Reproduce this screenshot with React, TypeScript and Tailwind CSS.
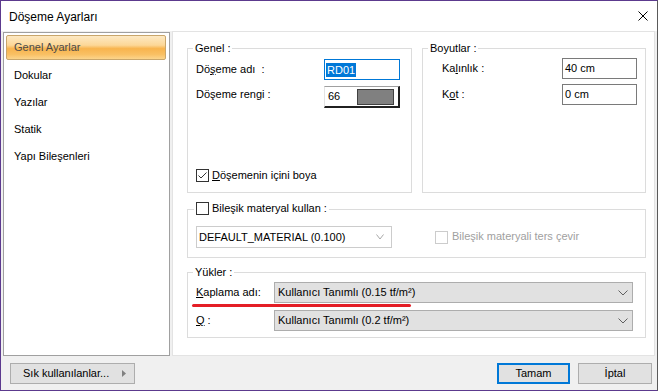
import React from "react";

function Chevron({ color = "#606060", w = 10 }: { color?: string; w?: number }) {
  return (
    <svg width={w} height="6" viewBox={`0 0 ${w} 6`}>
      <polyline points={`0.5,0.5 ${w / 2},5 ${w - 0.5},0.5`} fill="none" stroke={color} strokeWidth="1" />
    </svg>
  );
}

function CheckBox({ checked = false, disabled = false }: { checked?: boolean; disabled?: boolean }) {
  return (
    <div
      className={`w-[13px] h-[13px] bg-white border flex items-center justify-center shrink-0 ${
        disabled ? "border-[#cccccc]" : "border-[#333333]"
      }`}
    >
      {checked && (
        <svg width="11" height="11" viewBox="0 0 11 11">
          <polyline points="1.5,5.5 4,8 9.5,2.5" fill="none" stroke="#333333" strokeWidth="1" />
        </svg>
      )}
    </div>
  );
}

function Group({
  label,
  className,
  children,
}: {
  label: React.ReactNode;
  className: string;
  children?: React.ReactNode;
}) {
  return (
    <div className={`relative border border-[#dcdcdc] ${className}`}>
      <div className="absolute -top-[7px] left-[5px] px-[2px] bg-white leading-[13px] flex items-center">{label}</div>
      {children}
    </div>
  );
}

const sideItems = ["Dokular", "Yazılar", "Statik", "Yapı Bileşenleri"];

export default function App() {
  return (
    <div className="w-[658px] h-[391px] bg-[#f0f0f0] border border-[#5c3a8e] border-r-[#5a5a5a] flex flex-col text-[11px] leading-[13px] text-black font-['Liberation_Sans',Arial,sans-serif] overflow-hidden">
      {/* Title bar */}
      <div className="h-[30px] bg-white flex items-center justify-between pl-[8px] pr-[9px] shrink-0">
        <span className="text-[12px] pt-[2px]">Döşeme Ayarları</span>
        <svg width="10" height="10" viewBox="0 0 10 10">
          <line x1="0.5" y1="0.5" x2="9.5" y2="9.5" stroke="#000" strokeWidth="1" />
          <line x1="9.5" y1="0.5" x2="0.5" y2="9.5" stroke="#000" strokeWidth="1" />
        </svg>
      </div>

      {/* Body */}
      <div className="flex h-[325px] shrink-0">
        {/* Sidebar */}
        <div className="ml-[2px] mt-[1px] w-[167px] h-[324px] bg-white border border-[#a0a0a0] pt-[2px]">
          <div className="h-[27px]">
            <div className="ml-[2px] w-[160px] h-[25px] rounded-[2px] border border-[#c9a66b] bg-[linear-gradient(to_bottom,#fde9c4_0%,#fcd797_40%,#f8b44e_55%,#f9c064_80%,#fcd58c_100%)] flex items-center pl-[7px] text-[#4a4a4a]">
              Genel Ayarlar
            </div>
          </div>
          {sideItems.map((t) => (
            <div key={t} className="h-[27px] flex items-center pl-[10px]">
              {t}
            </div>
          ))}
        </div>

        {/* Main panel */}
        <div className="ml-[2px] w-[483px] h-[325px] bg-white border border-[#e3e3e3] pl-[14px] pt-[16px]">
          <div className="flex gap-[10px]">
            {/* Genel */}
            <Group label="Genel :" className="w-[225px] h-[145px] flex flex-col pl-[8px] pt-[10px] pb-[10px]">
              <div className="flex items-center h-[21px]">
                <div className="w-[128px]">
                  Dö<span className="underline">ş</span>eme adı&nbsp; :
                </div>
                <div className="w-[76px] h-[21px] border border-[#0078d7] flex items-center pl-[1px]">
                  <span className="bg-[#0078d7] text-white px-[1px] leading-[14px]">RD01</span>
                </div>
              </div>
              <div className="flex items-start h-[22px] mt-[6px]">
                <div className="w-[128px] mt-[2px]">Döşeme rengi :</div>
                <div className="w-[76px] h-[22px] border-t border-t-[#a0a0a0] border-l border-l-[#e3e3e3] border-r-2 border-r-[#202020] border-b-2 border-b-[#202020] flex items-center bg-white">
                  <span className="w-[32px] pl-[3px]">66</span>
                  <div className="w-[37px] h-[16px] bg-[#808080] border border-[#404040]" />
                </div>
              </div>
              <div className="mt-auto flex items-center h-[13px] gap-[3px]">
                <CheckBox checked />
                <span>
                  <span className="underline">D</span>öşemenin içini boya
                </span>
              </div>
            </Group>

            {/* Boyutlar */}
            <Group label="Boyutlar :" className="w-[224px] h-[145px] flex flex-col pl-[19px] pt-[9px]">
              <div className="flex items-center h-[21px]">
                <div className="w-[120px]">
                  Ka<span className="underline">l</span>ınlık :
                </div>
                <div className="w-[75px] h-[21px] border border-[#7a7a7a] flex items-center pl-[2px]">40 cm</div>
              </div>
              <div className="flex items-center h-[21px] mt-[5px]">
                <div className="w-[120px]">
                  K<span className="underline">o</span>t :
                </div>
                <div className="w-[75px] h-[21px] border border-[#7a7a7a] flex items-center pl-[2px]">0 cm</div>
              </div>
            </Group>
          </div>

          {/* Bileşik */}
          <div className="relative mt-[16px] w-[459px] h-[49px] border border-[#dcdcdc] pl-[8px] pt-[16px]">
            <div className="absolute -top-[8px] left-[6px] px-[2px] bg-white flex items-center gap-[3px] h-[13px]">
              <CheckBox />
              <span>Bileşik materyal kullan :</span>
            </div>
            <div className="flex items-center">
              <div className="w-[196px] h-[22px] border border-[#cccccc] flex items-center justify-between pl-[2px] pr-[7px] bg-white">
                <span>DEFAULT_MATERIAL (0.100)</span>
                <Chevron color="#a8a8a8" w={8} />
              </div>
              <div className="ml-[43px] flex items-center gap-[4px] text-[#a0a0a0]">
                <CheckBox disabled />
                <span className="-mt-[2px]">Bileşik materyali ters çevir</span>
              </div>
            </div>
          </div>

          {/* Yükler */}
          <Group label="Yükler :" className="mt-[14px] w-[459px] h-[66px] pl-[8px] pt-[9px]">
            <div className="flex items-center h-[21px]">
              <div className="w-[78px]">
                <span className="underline">K</span>aplama adı:
              </div>
              <div className="w-[359px] h-[21px] border border-[#adadad] bg-[#e1e1e1] flex items-center justify-between pl-[3px] pr-[4px]">
                <span>Kullanıcı Tanımlı (0.15 tf/m²)</span>
                <Chevron />
              </div>
            </div>
            <div className="flex items-center h-[21px] mt-[7px]">
              <div className="w-[78px]">
                <span className="underline">Q</span> :
              </div>
              <div className="w-[359px] h-[21px] border border-[#adadad] bg-[#e1e1e1] flex items-center justify-between pl-[3px] pr-[4px]">
                <span>Kullanıcı Tanımlı (0.2 tf/m²)</span>
                <Chevron />
              </div>
            </div>
            <div className="absolute left-[4px] top-[31px] w-[219px] h-[3px] rounded-full bg-[#e41e26]" />
          </Group>
        </div>
      </div>

      {/* Bottom bar */}
      <div className="flex-1 flex items-start pt-[7px] pl-[9px] pr-[5px]">
        <div className="w-[125px] h-[21px] border border-[#adadad] bg-[#e1e1e1] flex items-center justify-between pl-[12px] pr-[8px]">
          <span>Sık kullanılanlar...</span>
          <svg width="4" height="7" viewBox="0 0 4 7">
            <polygon points="0,0 4,3.5 0,7" fill="#808080" />
          </svg>
        </div>
        <div className="ml-auto w-[73px] h-[21px] border-2 border-[#0078d7] bg-[#e1e1e1] flex items-center justify-center">
          Tamam
        </div>
        <div className="ml-[8px] w-[74px] h-[21px] border border-[#adadad] bg-[#e1e1e1] flex items-center justify-center">
          İptal
        </div>
      </div>
    </div>
  );
}
